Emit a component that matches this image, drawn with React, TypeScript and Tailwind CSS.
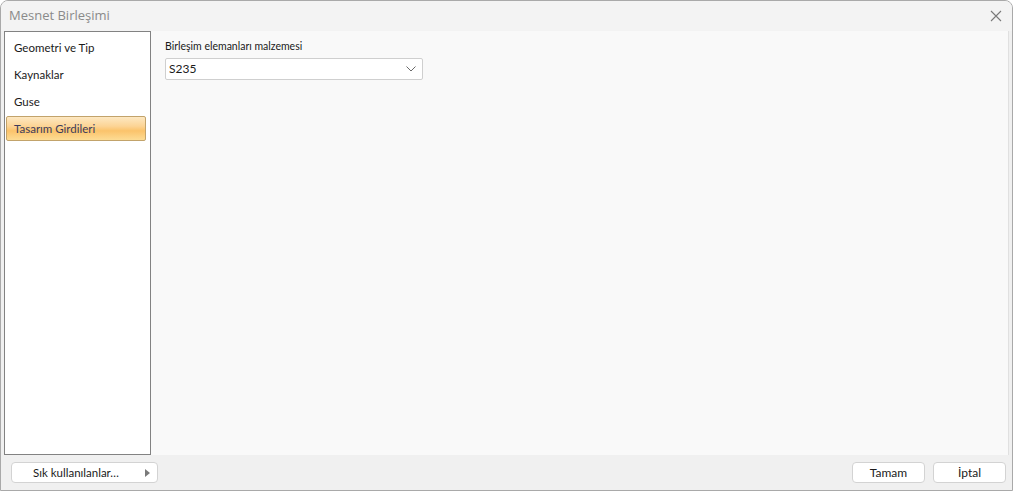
import { useState } from "react";

const menu = ["Geometri ve Tip", "Kaynaklar", "Guse", "Tasarım Girdileri"];

export default function App() {
  const [active, setActive] = useState(3);
  return (
    <div
      className="flex h-[491px] w-[1013px] flex-col overflow-hidden rounded-t-[8px] border border-[#a9a9a9] bg-[#f0f0f0] text-[12px] text-[#1a1a1a]"
      style={{ fontFamily: 'Lato, "Open Sans", sans-serif' }}
    >
      {/* title bar */}
      <div className="flex h-[30px] shrink-0 items-center justify-between bg-[#f3f3f3] pl-[8px] pr-[10px]">
        <span className="text-[13px] text-[#8a8a8a]" style={{ fontFamily: '"Open Sans", sans-serif' }}>
          Mesnet Birleşimi
        </span>
        <svg width="12" height="12" viewBox="0 0 12 12" className="text-[#7a7a7a]">
          <path d="M1 1L11 11M11 1L1 11" stroke="currentColor" strokeWidth="1.1" />
        </svg>
      </div>

      {/* body */}
      <div className="flex min-h-0 flex-1 pl-[3px] pr-[3px]">
        <ul className="w-[147px] shrink-0 border border-[#828282] bg-white pt-[3px] text-[11.5px]">
          {menu.map((item, i) => (
            <li key={item} className="pl-[1px] pr-[4px]">
              <button
                onClick={() => setActive(i)}
                className={
                  i === active
                    ? "flex h-[25px] w-full items-center rounded-[2px] border border-[#c2a36b] bg-[linear-gradient(#fde8c2_0%,#fcd495_40%,#fbc36b_60%,#fddc94_100%)] pl-[7px] text-left text-[#3b3b5c]"
                    : "flex h-[25px] w-full items-center border border-transparent pl-[7px] text-left"
                }
                style={{ marginTop: i === 0 ? 0 : 2 }}
              >
                {item}
              </button>
            </li>
          ))}
        </ul>
        <div className="flex-1 border-r border-[#e0e0e0] bg-[#f9f9f9] pl-[14px] pt-[8px]">
          <div className="mb-[3px] text-[10.5px]">Birleşim elemanları malzemesi</div>
          <div className="flex h-[22px] w-[258px] items-center justify-between rounded-[2px] border border-[#cfcfcf] bg-white pl-[3px] pr-[6px] text-[12px]">
            <span>S235</span>
            <svg width="10" height="6" viewBox="0 0 10 6" className="text-[#6a6a6a]">
              <path d="M0.5 0.5L5 5L9.5 0.5" stroke="currentColor" fill="none" strokeWidth="1" />
            </svg>
          </div>
        </div>
      </div>

      {/* footer */}
      <div className="flex h-[35px] shrink-0 items-center justify-between pl-[10px] pr-[6px]">
        <button className="relative flex h-[21px] w-[147px] items-center rounded-[4px] border border-[#d3d3d3] bg-white pl-[21px] text-left text-[11.5px]">
          Sık kullanılanlar…
          <svg width="5" height="8" viewBox="0 0 5 8" className="absolute right-[7px] top-[6px] text-[#7a7a7a]">
            <path d="M0 0L5 4L0 8Z" fill="currentColor" />
          </svg>
        </button>
        <div className="flex gap-[8px]">
          <button className="h-[21px] w-[73px] rounded-[4px] border border-[#d3d3d3] bg-white">Tamam</button>
          <button className="h-[21px] w-[73px] rounded-[4px] border border-[#d3d3d3] bg-white">İptal</button>
        </div>
      </div>
    </div>
  );
}
